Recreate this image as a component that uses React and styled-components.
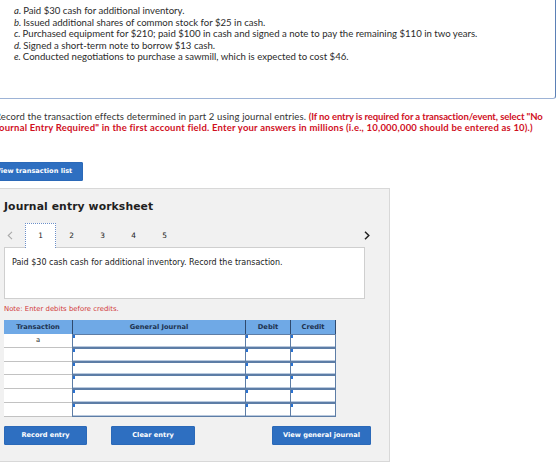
import React from "react";
import styled, { createGlobalStyle } from "styled-components";

const Global = createGlobalStyle`
  html, body { margin: 0; padding: 0; background: #ffffff; }
  body { width: 560px; height: 471px; overflow: hidden; }
  #root { width: 560px; height: 471px; overflow: hidden; }
`;

const Page = styled.div`
  width: 560px;
  height: 471px;
  overflow: hidden;
  font-family: "Lato", "Open Sans", sans-serif;
  color: #2b2b2b;
`;

const PromptBox = styled.div`
  margin: -10px 0 0 -20px;
  width: 576px;
  padding: 14px 0 35px 33px;
  box-sizing: border-box;
  border: 1.5px solid #5b80b6;
  border-bottom-color: #9db3d6;
  border-radius: 0 0 3px 0;
`;

const EventList = styled.ol`
  list-style: none;
  margin: 0;
  padding: 0;
`;

const EventItem = styled.li`
  font-size: 9.6px;
  line-height: 11.6px;
  color: #2b2b2b;
  white-space: nowrap;
`;

const Letter = styled.i`
  font-style: italic;
  margin-right: 2px;
`;

const Instruction = styled.p`
  margin: 12px 0 0 -5px;
  font-size: 9.5px;
  line-height: 11px;
  color: #333;
  white-space: nowrap;
  letter-spacing: 0.13px;
`;

const Warn = styled.b`
  color: #d0101e;
  font-weight: 700;
  letter-spacing: ${(p) => (p.$spread ? "0.2px" : "-0.1px")};
`;

const BlueButton = styled.button`
  display: inline-flex;
  align-items: center;
  justify-content: center;
  height: 19px;
  width: ${(p) => p.$w}px;
  padding: 0;
  border: 1px solid #2b69b8;
  border-radius: 1px;
  background: #2e6fc1;
  color: #ffffff;
  font-family: "DejaVu Sans", Verdana, sans-serif;
  font-weight: 700;
  font-size: 6.6px;
  white-space: nowrap;
  cursor: pointer;
`;

const ListButtonRow = styled.div`
  margin: 29px 0 0 -15px;
  display: flex;
`;

const Worksheet = styled.section`
  margin: 7px 0 0 -1px;
  width: 391px;
  height: 274px;
  box-sizing: border-box;
  background: #f1f1f1;
  border: 1px solid #d8d8d8;
  padding: 0 0 0 4px;
  font-family: "DejaVu Sans", Verdana, sans-serif;
`;

const Title = styled.h2`
  margin: 11px 0 0 0;
  font-size: 10.8px;
  line-height: 14px;
  font-weight: 700;
  color: #1f1f1f;
  letter-spacing: 0.1px;
`;

const TabRow = styled.div`
  margin-top: 9px;
  width: 370px;
  height: 25px;
  display: flex;
  align-items: center;
  position: relative;
`;

const Arrow = styled.span`
  display: flex;
  align-items: center;
  justify-content: ${(p) => (p.$start ? "flex-start" : "center")};
  padding-left: ${(p) => (p.$start ? 3 : 0)}px;
  box-sizing: border-box;
  width: ${(p) => p.$w || 16}px;
  height: 25px;
`;

const Tab = styled.span`
  box-sizing: border-box;
  width: 31px;
  height: 25px;
  display: flex;
  align-items: center;
  justify-content: center;
  font-size: 7.4px;
  color: #222;
  background: ${(p) => (p.$active ? "#ffffff" : "transparent")};
  border: 1px dotted ${(p) => (p.$active ? "#6c8fc8" : "transparent")};
  border-bottom: none;
  position: relative;
  z-index: 1;
`;

const Spacer = styled.span`
  flex: 1;
`;

const Description = styled.div`
  margin-top: -1px;
  width: 361px;
  height: 52px;
  box-sizing: border-box;
  background: #ffffff;
  border: 1px solid #cfcfcf;
  padding: 10px 0 0 7px;
  font-size: 8px;
  line-height: 10px;
  color: #222;
`;

const Note = styled.p`
  margin: 6px 0 0 0;
  font-size: 6.9px;
  line-height: 9px;
  color: #d23a3a;
`;

const Grid = styled.div`
  margin-top: 6px;
  width: 332px;
  display: grid;
  grid-template-columns: 68px 173px 45px 46px;
`;

const Head = styled.div`
  height: 14px;
  box-sizing: border-box;
  background: #6fa9e6;
  display: flex;
  align-items: center;
  justify-content: center;
  font-size: 6.7px;
  font-weight: 700;
  color: #1e3350;
  border-left: ${(p) => (p.$first ? "none" : "1.5px solid #2f4a6e")};
  border-right: ${(p) => (p.$last ? "1px solid #2f4a6e" : "none")};
`;

const TxnCell = styled.div`
  height: 13.8px;
  box-sizing: border-box;
  background: #ffffff;
  border-bottom: 1.5px solid #c2c2c2;
  display: flex;
  align-items: center;
  justify-content: center;
  font-size: 6.8px;
  color: #333;
`;

const EntryCell = styled.div`
  height: 13.8px;
  box-sizing: border-box;
  background: #ffffff;
  border: 1px solid #5d7da6;
  border-top-width: ${(p) => (p.$top ? 1 : 1.5)}px;
  border-bottom-width: 1px;
  border-right-width: ${(p) => (p.$last ? 1.5 : 0)}px;
  border-left-width: 1.5px;
  box-shadow: inset 0 -1px 0 #b9c9de;
  position: relative;

  &::before {
    content: "";
    position: absolute;
    left: 0;
    top: 0;
    width: 2px;
    height: 3px;
    background: #2a72d2;
  }
`;

const ActionRow = styled.div`
  margin-top: 9px;
  display: flex;
  align-items: flex-start;
  gap: 24px;
`;

const PushRight = styled.div`
  margin-left: 53px;
  display: flex;
`;

const events = [
  ["a.", "Paid $30 cash for additional inventory."],
  ["b.", "Issued additional shares of common stock for $25 in cash."],
  [
    "c.",
    "Purchased equipment for $210; paid $100 in cash and signed a note to pay the remaining $110 in two years.",
  ],
  ["d.", "Signed a short-term note to borrow $13 cash."],
  ["e.", "Conducted negotiations to purchase a sawmill, which is expected to cost $46."],
];

const rows = ["a", "", "", "", "", ""];

export default function App() {
  return (
    <Page>
      <Global />
      <PromptBox>
        <EventList>
          {events.map(([l, t]) => (
            <EventItem key={l}>
              <Letter>{l}</Letter>
              {t}
            </EventItem>
          ))}
        </EventList>
      </PromptBox>

      <Instruction>
        Record the transaction effects determined in part 2 using journal entries.{" "}
        <Warn>(If no entry is required for a transaction/event, select "No</Warn>
        <br />
        <Warn $spread>
          Journal Entry Required" in the first account field. Enter your answers in millions (i.e.,
          10,000,000 should be entered as 10).)
        </Warn>
      </Instruction>

      <ListButtonRow>
        <BlueButton $w={98}>View transaction list</BlueButton>
      </ListButtonRow>

      <Worksheet>
        <Title>Journal entry worksheet</Title>
        <TabRow>
          <Arrow $w={21} $start>
            <svg width="6" height="9" viewBox="0 0 6 9">
              <path d="M5 0.8 L1.2 4.5 L5 8.2" fill="none" stroke="#a9a9a9" strokeWidth="1.1" />
            </svg>
          </Arrow>
          <Tab $active>1</Tab>
          <Tab>2</Tab>
          <Tab>3</Tab>
          <Tab>4</Tab>
          <Tab>5</Tab>
          <Spacer />
          <Arrow $w={14}>
            <svg width="6" height="9" viewBox="0 0 6 9">
              <path d="M1 0.8 L4.8 4.5 L1 8.2" fill="none" stroke="#222" strokeWidth="1.5" />
            </svg>
          </Arrow>
        </TabRow>
        <Description>Paid $30 cash cash for additional inventory. Record the transaction.</Description>
        <Note>Note: Enter debits before credits.</Note>
        <Grid>
          <Head $first>Transaction</Head>
          <Head>General Journal</Head>
          <Head>Debit</Head>
          <Head $last>Credit</Head>
          {rows.map((r, i) => (
            <React.Fragment key={i}>
              <TxnCell>{r}</TxnCell>
              <EntryCell $top={i === 0} />
              <EntryCell $top={i === 0} />
              <EntryCell $top={i === 0} $last />
            </React.Fragment>
          ))}
        </Grid>
        <ActionRow>
          <BlueButton $w={83}>Record entry</BlueButton>
          <BlueButton $w={84}>Clear entry</BlueButton>
          <PushRight>
            <BlueButton $w={99}>View general journal</BlueButton>
          </PushRight>
        </ActionRow>
      </Worksheet>
    </Page>
  );
}
